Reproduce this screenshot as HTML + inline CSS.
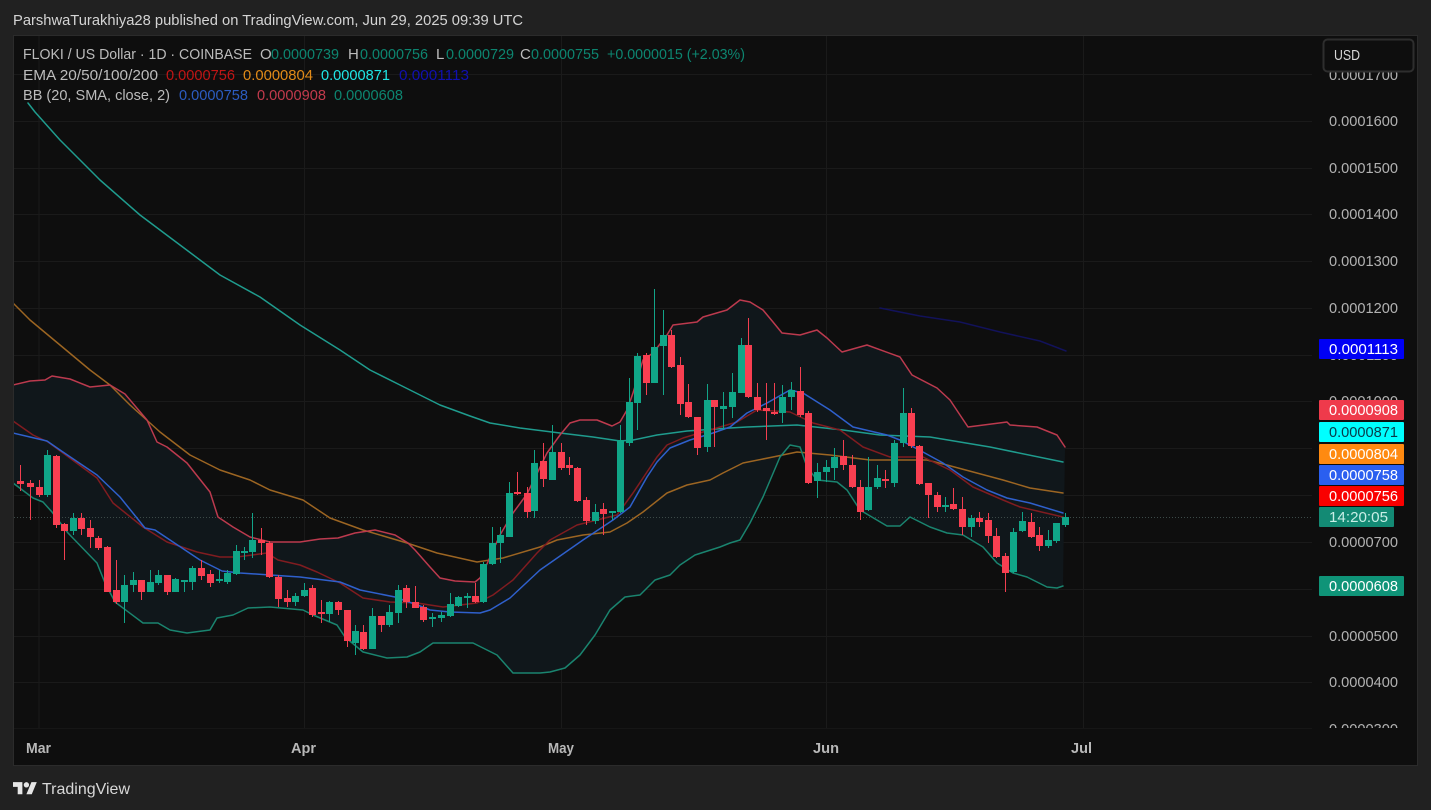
<!DOCTYPE html>
<html><head><meta charset="utf-8"><title>FLOKI / US Dollar</title>
<style>
html,body{margin:0;padding:0;background:#212121;width:1431px;height:810px;overflow:hidden}
svg{display:block}
text{font-family:"Liberation Sans",sans-serif;font-size:15px}
.l{fill:#bcbcbc}
.p{fill:#b2b2b2;font-size:15px}
.w{fill:#fff}
.n{fill:none;stroke-linejoin:round;stroke-linecap:round;stroke-width:1.5}
</style></head><body>
<svg width="1431" height="810" viewBox="0 0 1431 810" xmlns="http://www.w3.org/2000/svg">
<defs><clipPath id="c"><rect x="14" y="36" width="1300" height="692"/></clipPath>
<clipPath id="a"><rect x="1315" y="60" width="100" height="668"/></clipPath></defs>
<rect width="1431" height="810" fill="#212121"/>
<text x="13" y="25" fill="#d4d4d4" textLength="510" lengthAdjust="spacingAndGlyphs">ParshwaTurakhiya28 published on TradingView.com, Jun 29, 2025 09:39 UTC</text>
<rect x="13.5" y="35.5" width="1404" height="730" fill="#0e0e0e" stroke="#2b2b2b"/>
<g clip-path="url(#c)">
<path d="M14 74.5H1312M14 121.5H1312M14 168.5H1312M14 214.5H1312M14 261.5H1312M14 308.5H1312M14 355.5H1312M14 401.5H1312M14 448.5H1312M14 495.5H1312M14 542.5H1312M14 589.5H1312M14 636.5H1312M14 682.5H1312M39 36V728M304.500 36V728M561.500 36V728M826.500 36V728M1083.500 36V728" stroke="#1a1a1a" fill="none"/>
<polygon fill="#10171b" points="13,385 30,381 45,380 52,376 70,379 90,387 110,385 125,394 147,420 157,442 167,447 187,463 210,492 218,517 233,527 250,537 270,542 300,542 320,539 338,538 355,533 375,530 395,535 408,543 415,550 430,567 440,578 455,581 475,582 480,578 486,566 500,535 513,513 527,494 547,453 560,435 570,423 580,420 597,420 612,426 620,422 627,410 633,393 643,360 653,353 667,335 673,325 697,322 703,317 727,310 740,300 750,302 763,310 773,322 782,333 800,335 817,330 827,338 842,352 867,345 900,357 912,375 937,388 950,400 968,427 1007,422 1010,425 1037,427 1057,435 1065,447 1063,586 1057,588 1047,587 1027,577 1013,573 997,563 983,547 963,535 947,533 930,527 910,517 900,526 887,526 860,510 847,490 837,482 817,480 807,467 800,447 790,445 780,457 763,497 750,523 740,540 730,543 720,547 695,555 680,565 670,575 655,580 640,595 625,597 610,610 595,635 580,655 565,668 550,672 540,673 513,673 497,655 473,643 433,643 420,652 407,657 387,658 363,652 345,637 337,625 313,615 303,610 270,607 248,608 233,615 217,618 210,630 187,633 170,630 158,623 143,623 115,602 105,583 97,563 68,533 52,512 43,502 33,498 13,483"/>
<path d="M14 517.500H1312" stroke="#3c4a48" stroke-dasharray="1 2" fill="none"/>
<polyline class="n" stroke="#12125a" points="880,308 920,316 960,322 1000,332 1040,341 1066,351"/>
<polyline class="n" stroke="#1f9c8e" points="28,103 35,112 60,140 100,180 140,215 180,245 220,275 260,297 300,325 340,350 370,370 400,385 440,405 470,416 490,423 520,428 560,433 593,437 620,441 633,440 657,435 687,431 730,428 747,427 797,425 843,430 880,435 930,437 990,447 1063,462"/>
<polyline class="n" stroke="#9c6522" points="13,303 30,320 60,345 90,370 110,385 130,405 160,432 190,455 220,470 250,480 270,490 303,500 330,518 363,530 407,543 437,553 477,562 503,558 540,547 557,540 583,535 610,532 627,523 643,512 667,493 687,485 710,480 723,473 743,463 773,457 797,452 830,455 870,460 927,460 947,465 1003,480 1030,488 1063,493"/>
<polyline class="n" stroke="#801c20" points="13,421 33,435 48,442 63,453 97,478 113,503 143,527 167,542 197,552 220,557 237,557 267,553 278,560 300,565 317,572 340,583 363,598 390,602 417,603 443,607 477,603 493,595 513,580 537,553 550,540 577,525 597,520 617,515 633,493 657,457 667,445 683,438 703,432 737,422 757,410 790,412 813,423 840,430 863,447 890,457 923,457 950,470 973,487 1003,500 1020,507 1063,517"/>
<polyline class="n" stroke="#bc3a4e" points="13,385 30,381 45,380 52,376 70,379 90,387 110,385 125,394 147,420 157,442 167,447 187,463 210,492 218,517 233,527 250,537 270,542 300,542 320,539 338,538 355,533 375,530 395,535 408,543 415,550 430,567 440,578 455,581 475,582 480,578 486,566 500,535 513,513 527,494 547,453 560,435 570,423 580,420 597,420 612,426 620,422 627,410 633,393 643,360 653,353 667,335 673,325 697,322 703,317 727,310 740,300 750,302 763,310 773,322 782,333 800,335 817,330 827,338 842,352 867,345 900,357 912,375 937,388 950,400 968,427 1007,422 1010,425 1037,427 1057,435 1065,447"/>
<polyline class="n" stroke="#1a846f" points="13,483 33,498 43,502 52,512 68,533 97,563 105,583 115,602 143,623 158,623 170,630 187,633 210,630 217,618 233,615 248,608 270,607 303,610 313,615 337,625 345,637 363,652 387,658 407,657 420,652 433,643 473,643 497,655 513,673 540,673 550,672 565,668 580,655 595,635 610,610 625,597 640,595 655,580 670,575 680,565 695,555 720,547 730,543 740,540 750,523 763,497 780,457 790,445 800,447 807,467 817,480 837,482 847,490 860,510 887,526 900,526 910,517 930,527 947,533 963,535 983,547 997,563 1013,573 1027,577 1047,587 1057,588 1063,586"/>
<polyline class="n" stroke="#2f60cc" points="13,433 30,437 47,441 60,450 97,475 120,497 145,528 155,530 200,560 222,571 240,573 270,575 300,577 340,582 360,590 395,597 420,606 430,610 450,612 480,613 490,610 510,598 540,570 583,540 613,520 630,507 647,477 657,462 670,448 690,440 713,433 730,427 747,413 767,403 790,390 803,393 830,410 853,427 887,435 900,440 923,452 943,463 963,477 987,490 1007,498 1030,503 1063,513"/>
<path fill="none" stroke="#f23f50" stroke-width="1" d="M12.500 472V495M20.500 465V491M30.500 480V520M39.500 480V497M56.500 455V528M64.500 523V560M81.500 513V535M90.500 520V548M98.500 536V550M107.500 546V592M116.500 560V604M141.500 580V600M167.500 575V595M201.500 560V580M210.500 570V587M261.500 528V555M269.500 541V578M278.500 575V607M287.500 590V607M312.500 585V617M321.500 600V623M338.500 601V615M347.500 610V647M363.500 625V650M381.500 616V632M406.500 585V608M415.500 586V608M423.500 605V622M475.500 583V603M517.500 472V495M527.500 487V518M543.500 443V487M561.500 443V470M569.500 457V475M577.500 467V502M586.500 497V525M603.500 503V535M646.500 353V395M671.500 330V368M680.500 357V415M688.500 384V418M697.500 417V455M714.500 400V447M748.500 318V398M757.500 383V412M766.500 383V440M774.500 383V415M800.500 367V417M808.500 411V484M843.500 440V470M852.500 455V488M860.500 480V520M885.500 470V488M911.500 408V448M919.500 445V485M928.500 483V518M937.500 492V512M953.500 488V510M962.500 497V535M979.500 512V527M988.500 513V543M996.500 528V558M1005.500 553V592M1031.500 513V538M1039.500 527V551"/>
<path fill="none" stroke="#12a488" stroke-width="1" d="M47.500 450V497M73.500 513V535M124.500 575V623M133.500 572V592M150.500 570V592M158.500 570V585M175.500 578V592M184.500 580V592M192.500 566V590M219.500 570V583M227.500 570V584M236.500 545V575M244.500 547V560M252.500 513V558M295.500 593V606M304.500 583V597M329.500 601V622M355.500 625V655M372.500 608V649M389.500 605V627M398.500 585V623M432.500 613V627M441.500 612V622M450.500 593V617M458.500 596V607M467.500 593V608M483.500 562V603M492.500 527V565M500.500 527V563M509.500 482V537M534.500 450V518M552.500 425V480M595.500 504V524M612.500 511V520M620.500 425V513M629.500 378V446M637.500 353V430M654.500 289V383M663.500 310V395M707.500 384V452M723.500 392V430M732.500 373V418M741.500 338V393M782.500 385V423M791.500 382V410M817.500 463V498M826.500 460V482M834.500 448V480M868.500 457V511M877.500 465V489M894.500 440V487M903.500 388V447M945.500 497V512M971.500 515V537M1013.500 528V573M1022.500 512V532M1048.500 530V548M1056.500 523V543M1065.500 513V527"/>
<path fill="none" stroke="#f83f51" stroke-width="7" d="M20.500 481V484M30.500 483V487M39.500 487V495M56.500 456V525M64.500 524V531M81.500 518V529M90.500 528V537M98.500 538V548M107.500 547V592M116.500 590V602M141.500 580V592M167.500 575V592M201.500 568V576M210.500 574V583M261.500 540V543M269.500 543V577M278.500 577V599M287.500 598V602M312.500 588V615M321.500 612V614M338.500 602V610M347.500 610V641M363.500 632V649M381.500 616V625M406.500 588V602M415.500 602V608M423.500 607V620M475.500 596V602M517.500 492V494M527.500 493V512M543.500 461V479M561.500 452V468M569.500 465V468M577.500 468V501M586.500 500V521M603.500 509V514M646.500 355V383M671.500 335V367M680.500 365V404M688.500 402V417M697.500 417V448M714.500 400V407M748.500 345V397M757.500 397V410M766.500 408V411M774.500 412V414M800.500 391V415M808.500 413V483M843.500 456V465M852.500 465V487M860.500 487V512M885.500 479V481M911.500 413V446M919.500 446V484M928.500 483V495M937.500 495V507M953.500 504V509M962.500 509V527M979.500 518V522M988.500 520V536M996.500 536V557M1005.500 556V573M1031.500 522V537M1039.500 535V546"/>
<path fill="none" stroke="#10a688" stroke-width="7" d="M47.500 455V495M73.500 518V531M124.500 585V602M133.500 580V585M150.500 582V592M158.500 575V583M175.500 579V592M184.500 580V582M192.500 568V582M219.500 579V581M227.500 573V582M236.500 551V574M244.500 551V553M252.500 540V552M295.500 596V602M304.500 590V596M329.500 602V614M355.500 631V643M372.500 616V649M389.500 612V625M398.500 590V613M432.500 617V619M441.500 615V618M450.500 604V616M458.500 597V606M467.500 596V598M483.500 564V602M492.500 543V564M500.500 535V543M509.500 493V537M534.500 463V511M552.500 452V480M595.500 512V521M612.500 511V513M620.500 440V512M629.500 402V443M637.500 356V403M654.500 347V383M663.500 335V346M707.500 400V447M723.500 406V409M732.500 392V407M741.500 345V393M782.500 397V413M791.500 390V397M817.500 472V481M826.500 467V472M834.500 457V468M868.500 487V510M877.500 478V487M894.500 443V483M903.500 413V443M945.500 505V507M971.500 518V527M1013.500 532V572M1022.500 521V531M1048.500 540V546M1056.500 523V541M1065.500 517V525"/>
</g>
<path d="M14 728.500H1312" stroke="#161616"/>
<g class="l">
<text x="23" y="59" textLength="229" lengthAdjust="spacingAndGlyphs">FLOKI / US Dollar · 1D · COINBASE</text>
<text x="260" y="59">O</text><text x="348" y="59">H</text><text x="436" y="59">L</text><text x="520" y="59">C</text>
<text x="23" y="80" textLength="135" lengthAdjust="spacingAndGlyphs">EMA 20/50/100/200</text>
<text x="23" y="100" textLength="147" lengthAdjust="spacingAndGlyphs">BB (20, SMA, close, 2)</text>
</g>
<g fill="#0d8570">
<text x="271" y="59" textLength="68" lengthAdjust="spacingAndGlyphs">0.0000739</text>
<text x="360" y="59" textLength="68" lengthAdjust="spacingAndGlyphs">0.0000756</text>
<text x="446" y="59" textLength="68" lengthAdjust="spacingAndGlyphs">0.0000729</text>
<text x="531" y="59" textLength="68" lengthAdjust="spacingAndGlyphs">0.0000755</text>
<text x="607" y="59" textLength="138" lengthAdjust="spacingAndGlyphs">+0.0000015 (+2.03%)</text>
</g>
<text x="166" y="80" fill="#c01515" textLength="69" lengthAdjust="spacingAndGlyphs">0.0000756</text>
<text x="243" y="80" fill="#e08a18" textLength="70" lengthAdjust="spacingAndGlyphs">0.0000804</text>
<text x="321" y="80" fill="#1fe6e6" textLength="69" lengthAdjust="spacingAndGlyphs">0.0000871</text>
<text x="399" y="80" fill="#1010b0" textLength="70" lengthAdjust="spacingAndGlyphs">0.0001113</text>
<text x="179" y="100" fill="#2c5cc0" textLength="69" lengthAdjust="spacingAndGlyphs">0.0000758</text>
<text x="257" y="100" fill="#c23a4c" textLength="69" lengthAdjust="spacingAndGlyphs">0.0000908</text>
<text x="334" y="100" fill="#0d8570" textLength="69" lengthAdjust="spacingAndGlyphs">0.0000608</text>
<g class="p" clip-path="url(#a)">
<text x="1329" y="80" textLength="69" lengthAdjust="spacingAndGlyphs">0.0001700</text>
<text x="1329" y="126" textLength="69" lengthAdjust="spacingAndGlyphs">0.0001600</text>
<text x="1329" y="173" textLength="69" lengthAdjust="spacingAndGlyphs">0.0001500</text>
<text x="1329" y="219" textLength="69" lengthAdjust="spacingAndGlyphs">0.0001400</text>
<text x="1329" y="266" textLength="69" lengthAdjust="spacingAndGlyphs">0.0001300</text>
<text x="1329" y="313" textLength="69" lengthAdjust="spacingAndGlyphs">0.0001200</text>
<text x="1329" y="360" textLength="69" lengthAdjust="spacingAndGlyphs">0.0001100</text>
<text x="1329" y="406" textLength="69" lengthAdjust="spacingAndGlyphs">0.0001000</text>
<text x="1329" y="547" textLength="69" lengthAdjust="spacingAndGlyphs">0.0000700</text>
<text x="1329" y="641" textLength="69" lengthAdjust="spacingAndGlyphs">0.0000500</text>
<text x="1329" y="687" textLength="69" lengthAdjust="spacingAndGlyphs">0.0000400</text>
<text x="1329" y="734" textLength="69" lengthAdjust="spacingAndGlyphs">0.0000300</text>
</g>
<rect x="1319" y="339" width="85" height="20" rx="1" fill="#0000f5"/>
<rect x="1319" y="400" width="85" height="20" rx="1" fill="#ef3a4b"/>
<rect x="1319" y="422" width="85" height="20" rx="1" fill="#00ffff"/>
<rect x="1319" y="444" width="85" height="20" rx="1" fill="#ff8a10"/>
<rect x="1319" y="465" width="85" height="20" rx="1" fill="#2a5ff0"/>
<rect x="1319" y="486" width="85" height="20" rx="1" fill="#fa0000"/>
<rect x="1319" y="507" width="75" height="20" rx="1" fill="#138a74"/>
<rect x="1319" y="576" width="85" height="20" rx="1" fill="#0f9478"/>
<g class="w">
<text x="1329" y="354" textLength="69" lengthAdjust="spacingAndGlyphs">0.0001113</text>
<text x="1329" y="415" textLength="69" lengthAdjust="spacingAndGlyphs">0.0000908</text>
<text x="1329" y="459" textLength="69" lengthAdjust="spacingAndGlyphs">0.0000804</text>
<text x="1329" y="480" textLength="69" lengthAdjust="spacingAndGlyphs">0.0000758</text>
<text x="1329" y="501" textLength="69" lengthAdjust="spacingAndGlyphs">0.0000756</text>
<text x="1329" y="522" textLength="59" lengthAdjust="spacingAndGlyphs" fill="#c8eee6">14:20:05</text>
<text x="1329" y="591" textLength="69" lengthAdjust="spacingAndGlyphs">0.0000608</text>
</g>
<text x="1329" y="437" fill="#083a4a" textLength="69" lengthAdjust="spacingAndGlyphs">0.0000871</text>
<rect x="1323.500" y="39.500" width="90" height="32" rx="4" fill="#0e0e0e" stroke="#2e2e2e" stroke-width="2"/>
<text x="1334" y="60" fill="#d8d8d8" textLength="26" lengthAdjust="spacingAndGlyphs">USD</text>
<g fill="#b8b8b8" style="font-weight:700">
<text x="26" y="753" textLength="25" lengthAdjust="spacingAndGlyphs">Mar</text>
<text x="291" y="753" textLength="25" lengthAdjust="spacingAndGlyphs">Apr</text>
<text x="548" y="753" textLength="26" lengthAdjust="spacingAndGlyphs">May</text>
<text x="813" y="753" textLength="26" lengthAdjust="spacingAndGlyphs">Jun</text>
<text x="1071" y="753" textLength="21" lengthAdjust="spacingAndGlyphs">Jul</text>
</g>
<g transform="translate(13,779.500) scale(.67)" fill="#e6e6e6"><path d="M14 22H7V11H0V4h14v18zM28 22h-8l7.500-18h8L28 22z"/><circle cx="20" cy="8" r="4"/></g>
<text x="42" y="794" fill="#d8d8d8" style="font-size:16px" textLength="88" lengthAdjust="spacingAndGlyphs">TradingView</text>
</svg>
</body></html>
